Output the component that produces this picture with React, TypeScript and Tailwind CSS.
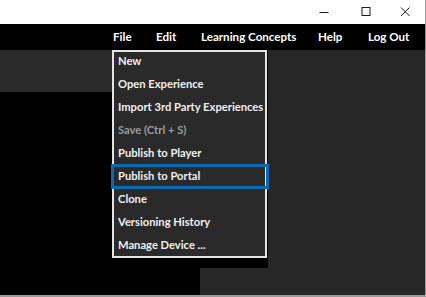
const menuItems = [
  { label: 'New' },
  { label: 'Open Experience' },
  { label: 'Import 3rd Party Experiences' },
  { label: 'Save (Ctrl + S)', disabled: true },
  { label: 'Publish to Player' },
  { label: 'Publish to Portal', selected: true },
  { label: 'Clone' },
  { label: 'Versioning History' },
  { label: 'Manage Device ...' },
]

const topMenu = [
  { label: 'File', w: 'w-[43px]' },
  { label: 'Edit', w: 'w-[45px]' },
  { label: 'Learning Concepts', w: 'w-[117px]' },
  { label: 'Help', w: 'w-[50px]' },
  { label: 'Log Out', w: 'w-[50px]' },
]

function TitleBar() {
  return (
    <div className="h-[24px] bg-white flex items-center justify-end shrink-0">
      <div className="w-[45px] h-full flex items-center justify-center">
        <svg width="10" height="10" viewBox="0 0 10 10">
          <path d="M0.5 5.5h9" stroke="#1a1a1a" strokeWidth="1" />
        </svg>
      </div>
      <div className="w-[39px] h-full flex items-center justify-center">
        <svg width="10" height="10" viewBox="0 0 10 10">
          <rect x="1" y="0.5" width="8" height="8" fill="none" stroke="#1a1a1a" strokeWidth="1" />
        </svg>
      </div>
      <div className="w-[40px] h-full flex items-center justify-center">
        <svg width="10" height="10" viewBox="0 0 10 10">
          <path d="M1 0.5l8.5 8.5M9.5 0.5l-8.5 8.5" stroke="#1a1a1a" strokeWidth="1" />
        </svg>
      </div>
    </div>
  )
}

function MenuBar() {
  return (
    <div
      className="h-[26px] bg-black flex items-center pl-[113px] text-white text-[11.6px] font-bold shrink-0"
      style={{ fontFamily: 'Lato, "Noto Sans", sans-serif' }}
    >
      {topMenu.map((m) => (
        <span key={m.label} className={`${m.w} whitespace-nowrap`}>
          {m.label}
        </span>
      ))}
    </div>
  )
}

function FileMenu() {
  return (
    <div className="absolute left-[112px] top-[50px] w-[156px] h-[218px] bg-black">
      <div
        className="w-[155px] h-[208px] bg-[#2a2a2a] outline-2 -outline-offset-2 outline-[#e4e4e4] text-[11.2px] font-bold"
        style={{ fontFamily: 'Lato, "Noto Sans", sans-serif' }}
      >
        {menuItems.map((item) => (
          <div
            key={item.label}
            className={
              'h-[23px] flex items-center pl-[6px] whitespace-nowrap relative ' +
              (item.disabled ? 'text-[#9c9c9c] ' : 'text-[#f0f0f0] ') +
              (item.selected ? 'w-[156px] outline-3 -outline-offset-2 outline-[#0a6bb3] z-10' : '')
            }
          >
            {item.label}
          </div>
        ))}
      </div>
    </div>
  )
}

export default function App() {
  return (
    <div className="w-[426px] h-[297px] relative overflow-hidden flex flex-col border-r border-b-2 border-[#9a9a9a] bg-black">
      <TitleBar />
      <MenuBar />
      <div className="flex flex-1">
        <div className="w-[200px] flex flex-col">
          <div className="h-[42px] bg-[#2b2b2b]" />
          <div className="flex-1 bg-black" />
        </div>
        <div className="flex-1 bg-[#272727]" />
      </div>
      <FileMenu />
    </div>
  )
}
